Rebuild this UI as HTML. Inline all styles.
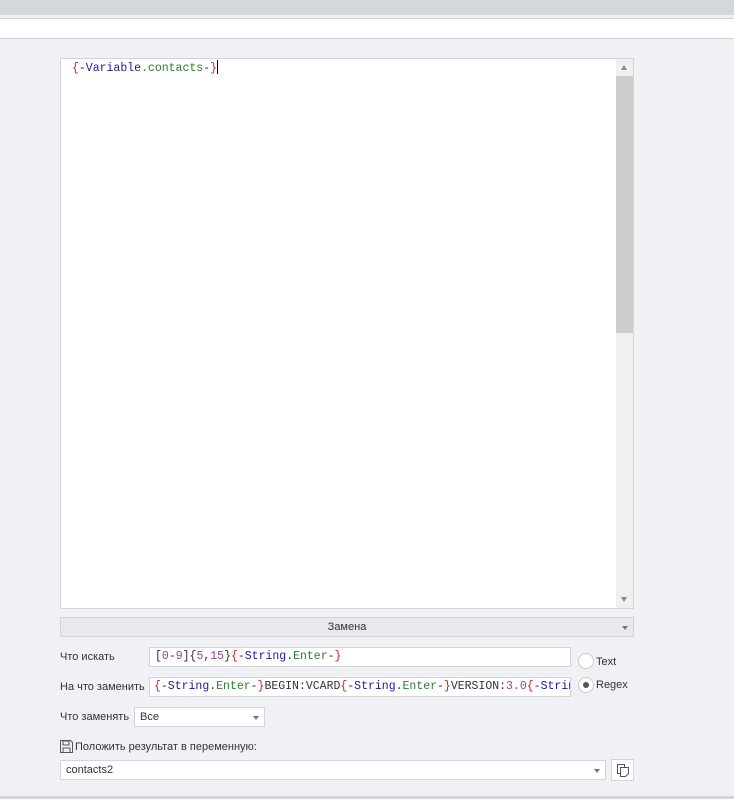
<!DOCTYPE html>
<html><head><meta charset="utf-8"><style>
*{box-sizing:border-box;margin:0;padding:0}
body{width:734px;height:799px;background:#f0f1f5;font-family:"Liberation Sans",sans-serif;font-size:11px;color:#333;position:relative;overflow:hidden}
.abs{position:absolute}
.mono{font-family:"Liberation Mono",monospace;font-size:11.5px}
.r{color:#c0272d}.b{color:#1a1aa6}.g{color:#2a7d2a}.p{color:#a03c9c}.k{color:#333}
.box{background:#fff;border:1px solid #d3d5da}
.arrow{width:0;height:0;border-left:3px solid transparent;border-right:3px solid transparent;border-top:4px solid #777}
</style></head><body>
<div class="abs" style="left:0;top:0;width:734px;height:15px;background:#d4d7dc"></div>
<div class="abs" style="left:0;top:18px;width:734px;height:21px;background:#fff;border-top:1px solid #d0d2d6;border-bottom:1px solid #d0d2d6"></div>

<div class="abs box" style="left:60px;top:58px;width:574px;height:551px">
  <div class="abs mono" style="left:11px;top:1px"><span class="r">{</span><span class="b">-Variable</span><span class="g">.contacts</span><span class="b">-</span><span class="r">}</span><span style="display:inline-block;width:1px;height:14px;background:#000;vertical-align:-3px"></span></div>
  <div class="abs" style="left:555px;top:0;width:17px;height:549px;background:#f0f0f0"></div>
  <div class="abs" style="left:555px;top:17px;width:17px;height:257px;background:#cdcdcd"></div>
  <div class="abs" style="left:560px;top:6px;width:0;height:0;border-left:3px solid transparent;border-right:3px solid transparent;border-bottom:5px solid #888"></div>
  <div class="abs" style="left:560px;top:538px;width:0;height:0;border-left:3px solid transparent;border-right:3px solid transparent;border-top:5px solid #888"></div>
</div>

<div class="abs" style="left:60px;top:617px;width:574px;height:20px;background:#e8e9ed;border:1px solid #d3d5da;text-align:center;line-height:18px">Замена
  <div class="abs arrow" style="right:5px;top:8px"></div></div>

<div class="abs" style="left:60px;top:651px">Что искать</div>
<div class="abs box mono" style="left:149px;top:647px;width:422px;height:20px;padding:2px 5px;white-space:nowrap;overflow:hidden"><span class="k">[</span><span class="p">0</span><span class="k">-</span><span class="p">9</span><span class="k">]{</span><span class="p">5</span><span class="k">,</span><span class="p">15</span><span class="k">}</span><span class="r">{</span><span class="b">-String</span><span class="k">.</span><span class="g">Enter</span><span class="b">-</span><span class="r">}</span></div>

<div class="abs" style="left:60px;top:681px">На что заменить</div>
<div class="abs box mono" style="left:149px;top:677px;width:422px;height:20px;padding:2px 4px;white-space:nowrap;overflow:hidden"><span class="r">{</span><span class="b">-String</span><span class="k">.</span><span class="g">Enter</span><span class="b">-</span><span class="r">}</span><span class="k">BEGIN:VCARD</span><span class="r">{</span><span class="b">-String</span><span class="k">.</span><span class="g">Enter</span><span class="b">-</span><span class="r">}</span><span class="k">VERSION:</span><span class="p">3.0</span><span class="r">{</span><span class="b">-String</span></div>

<div class="abs" style="left:578px;top:653px;width:16px;height:16px;border-radius:50%;background:#fff;border:1px solid #ccc"></div>
<div class="abs" style="left:596px;top:656px">Text</div>
<div class="abs" style="left:578px;top:677px;width:16px;height:16px;border-radius:50%;background:#fff;border:1px solid #ccc"><div class="abs" style="left:4px;top:4px;width:6px;height:6px;border-radius:50%;background:#555"></div></div>
<div class="abs" style="left:596px;top:679px">Regex</div>

<div class="abs" style="left:60px;top:711px">Что заменять</div>
<div class="abs box" style="left:134px;top:707px;width:131px;height:20px;padding:3px 5px">Все<div class="abs arrow" style="right:5px;top:8px"></div></div>

<svg class="abs" style="left:60px;top:740px" width="13" height="13" viewBox="0 0 13 13"><path d="M0.5 0.5h10l2 2v10h-12z" fill="none" stroke="#555"/><rect x="3" y="1" width="6" height="4" fill="none" stroke="#555"/><rect x="3" y="8" width="7" height="4.5" fill="none" stroke="#555"/></svg>
<div class="abs" style="left:75px;top:741px">Положить результат в переменную:</div>

<div class="abs box" style="left:60px;top:760px;width:546px;height:20px;padding:3px 5px">contacts2<div class="abs arrow" style="right:5px;top:8px"></div></div>
<div class="abs box" style="left:611px;top:759px;width:23px;height:22px">
<svg class="abs" style="left:5px;top:4px" width="12" height="13" viewBox="0 0 12 13"><rect x="0.5" y="0.5" width="7" height="9" fill="#fff" stroke="#555"/><path d="M3.5 3.5h8v6l-3 3h-5z" fill="#fff" stroke="#555"/></svg></div>

<div class="abs" style="left:0;top:796px;width:734px;height:3px;background:#d3d5da"></div>
</body></html>
